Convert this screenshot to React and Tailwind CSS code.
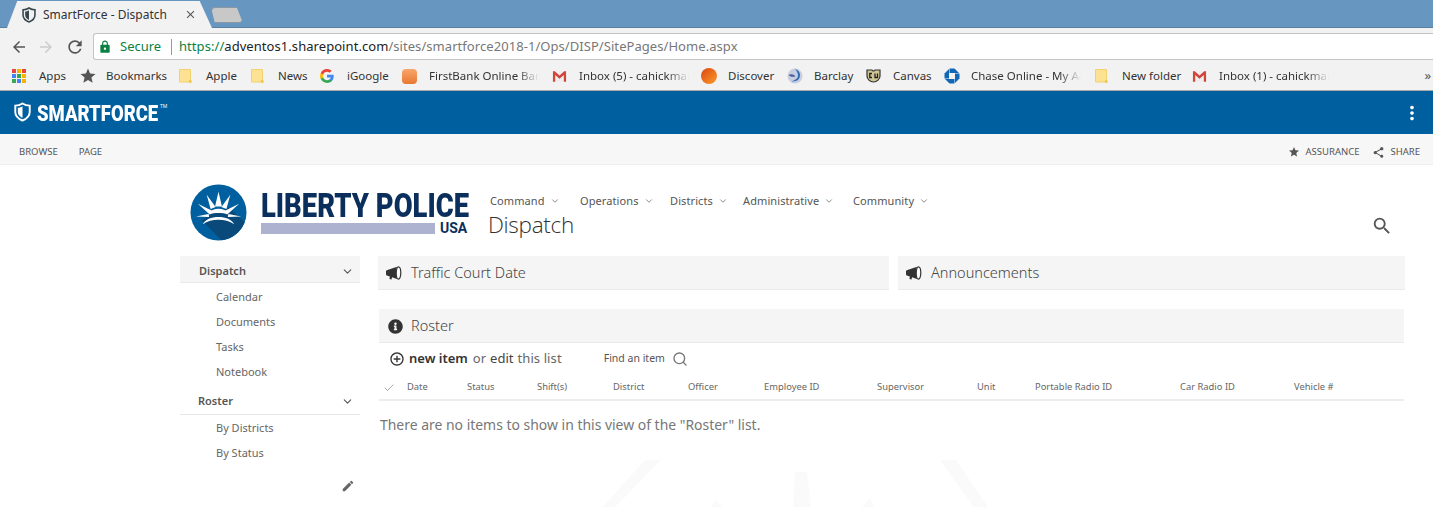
import { ChevronDown, Check, Search } from "lucide-react";
import { FaInfoCircle } from "react-icons/fa";
import {
  MdAddCircleOutline,
  MdArrowBack,
  MdArrowForward,
  MdClose,
  MdEdit,
  MdLock,
  MdMoreVert,
  MdRefresh,
  MdSearch,
  MdShare,
  MdStar,
} from "react-icons/md";

const FADE = "[mask-image:linear-gradient(to_right,black_80%,transparent)]";

function Shield({ className, stroke = "#37474f" }) {
  return (
    <svg viewBox="0 0 16 18" className={className}>
      <path d="M8 1 C5.500 2.600 3.500 3 1.200 3 V9 C1.200 13 4.500 15.600 8 17 C11.500 15.600 14.800 13 14.800 9 V3 C12.500 3 10.500 2.600 8 1 Z" fill="none" stroke={stroke} strokeWidth="1.800" />
      <path d="M8 3.600 V14.600 C5.500 13.400 3.600 11.600 3.600 9 V5 C5.300 5 6.600 4.500 8 3.600 Z" fill={stroke} />
    </svg>
  );
}

function Bullhorn() {
  return (
    <svg viewBox="0 0 16 14" className="w-[16px] h-[14px] mr-[9px] shrink-0">
      <path d="M0 5.500 C0 4.500 .6 4.300 1.500 4.100 L11 .8 C10 3 10 10.500 11 13 L6 11.300 L5.500 13.500 L3.500 13 L3.800 10.500 L1.500 9.700 C.6 9.500 0 9.300 0 8.300 Z" fill="#333" />
      <ellipse cx="12.500" cy="7" rx="2.300" ry="6.200" fill="#fff" stroke="#333" strokeWidth="1.200" />
    </svg>
  );
}

function Folder() {
  return (
    <svg viewBox="0 0 13 15" className="w-[13px] h-[15px]">
      <path d="M.5.5h11v12.500h-11z" fill="#fde293" stroke="#f2d26f" />
      <path d="M10 11h2.500v3H10z" fill="#f2c94c" />
    </svg>
  );
}

function Gmail() {
  return (
    <svg viewBox="0 0 16 12" className="w-[15px] h-[12px]">
      <path d="M1 1h14v11H1z" fill="#eee" />
      <path d="M1 12V1h2l5 4.400L13 1h2v11h-2.400V4.800L8 8.800 3.400 4.800V12z" fill="#d0463b" />
    </svg>
  );
}

function AppsGrid() {
  const colors = ["#e8453c", "#f4b400", "#e8453c", "#4285f4", "#34a853", "#f4b400", "#34a853", "#4285f4", "#f4b400"];
  return (
    <div className="grid grid-cols-3 gap-[1px] w-[14px]">
      {colors.map((c, i) => (
        <span key={i} className="w-[4px] h-[4px]" style={{ background: c }} />
      ))}
    </div>
  );
}

function GoogleG() {
  return (
    <svg viewBox="0 0 18 18" className="w-[14px] h-[14px]">
      <path d="M17.600 9.200c0-.6-.1-1.300-.2-1.800H9v3.400h4.800c-.2 1.100-.8 2-1.800 2.700v2.300h2.900c1.700-1.600 2.700-3.900 2.700-6.600z" fill="#4285f4" />
      <path d="M9 18c2.400 0 4.500-.8 5.900-2.200L12 13.500c-.8.500-1.800.9-3 .9-2.300 0-4.300-1.600-5-3.700H1v2.300C2.500 16 5.500 18 9 18z" fill="#34a853" />
      <path d="M4 10.700c-.4-1.100-.4-2.300 0-3.400V5H1c-1.300 2.500-1.300 5.500 0 8z" fill="#fbbc05" />
      <path d="M9 3.600c1.300 0 2.500.5 3.400 1.300L15 2.400C13.400.9 11.300 0 9 0 5.500 0 2.500 2 1 5l3 2.300c.7-2.100 2.700-3.700 5-3.700z" fill="#ea4335" />
    </svg>
  );
}

function FirstBank() {
  return <div className="w-[15px] h-[15px] rounded-sm bg-gradient-to-b from-[#f9a66b] to-[#e8772e]" />;
}

function Discover() {
  return <div className="w-[16px] h-[16px] rounded-full bg-gradient-to-br from-[#d9430f] to-[#fb9a2b]" />;
}

function Barclay() {
  return (
    <svg viewBox="0 0 16 16" className="w-[16px] h-[16px]">
      <circle cx="8" cy="8" r="7.500" fill="#c9cde0" />
      <path d="M8 .8c4 1.500 6 5 4.500 9-1 2.700-4 4-8 3.500 3.500-1 6-2.500 6.500-5C11.300 5.800 10 3 8 .8z" fill="#2a6bb3" />
      <path d="M1.500 7c2.500-1.500 5-1 7 1.500-2.500.5-5 .5-7-1.500z" fill="#4c5a9c" />
    </svg>
  );
}

function CU() {
  return (
    <svg viewBox="0 0 15 14" className="w-[15px] h-[14px]">
      <path d="M1 1h5l1 1h1l1-1h5v6c0 3-3 6-6.500 6S1 10 1 7z" fill="#cfc493" stroke="#333" strokeWidth="1.200" />
      <path d="M6 4.500H3.800v4H6M9 4.500v4h2.500v-4" fill="none" stroke="#222" strokeWidth="1.300" />
    </svg>
  );
}

function Chase() {
  return (
    <svg viewBox="0 0 16 16" className="w-[16px] h-[16px]" fill="#1166b5">
      <path d="M5.500 .5h5l4.500 4.500H5.500z" />
      <path d="M15.500 5.500v5L11 15V5.500z" />
      <path d="M10.500 15.500h-5L1 11h9.500z" />
      <path d="M.5 10.500v-5L5 1v9.500z" />
    </svg>
  );
}

const bookmarks = [
  { w: "w-[67px]", icon: <AppsGrid />, label: "Apps" },
  { w: "w-[100px]", icon: <MdStar className="text-[#555] text-[18px]" />, label: "Bookmarks" },
  { w: "w-[72px]", icon: <Folder />, label: "Apple" },
  { w: "w-[69px]", icon: <Folder />, label: "News" },
  { w: "w-[82px]", icon: <GoogleG />, label: "iGoogle" },
  { w: "w-[150px]", icon: <FirstBank />, label: "FirstBank Online Banking", fade: true },
  { w: "w-[149px]", icon: <Gmail />, label: "Inbox (5) - cahickman", fade: true },
  { w: "w-[86px]", icon: <Discover />, label: "Discover" },
  { w: "w-[79px]", icon: <Barclay />, label: "Barclay" },
  { w: "w-[78px]", icon: <CU />, label: "Canvas" },
  { w: "w-[151px]", icon: <Chase />, label: "Chase Online - My Accounts", fade: true },
  { w: "w-[97px]", icon: <Folder />, label: "New folder" },
  { w: "w-[149px]", icon: <Gmail />, label: "Inbox (1) - cahickman", fade: true },
];

function BrowserChrome() {
  return (
    <div className="font-['Noto_Sans',sans-serif] text-[#333]">
      {/* tab strip */}
      <div className="h-[28px] bg-[#6797c0] flex items-end border-b border-[#5b7f9f]">
        <div className="w-[205px] h-[27px] -mb-px ml-[7px] bg-[#f2f2f2] [clip-path:polygon(0_100%,5%_0,94%_0,100%_100%)] flex items-center pl-[15px] pr-[15px]">
          <Shield className="w-[14px] h-[16px]" />
          <span className="ml-[7px] text-[12px] flex-1 whitespace-nowrap">SmartForce - Dispatch</span>
          <MdClose className="text-[#555] text-[13px]" />
        </div>
        <div className="w-[32px] h-[16px] -ml-[1px] mb-[4px] bg-[#c8c8c8] border border-[#8b97a3] rounded-sm [clip-path:polygon(0_0,80%_0,100%_100%,12%_100%)]" />
      </div>

      {/* address bar */}
      <div className="h-[34px] pt-[3px] bg-[#f2f2f2] flex items-center">
        <div className="flex items-center pl-[10px] gap-[9px] text-[#555] w-[93px] shrink-0">
          <MdArrowBack className="text-[18px]" />
          <MdArrowForward className="text-[18px] text-[#ccc]" />
          <MdRefresh className="text-[20px] ml-px" />
        </div>
        <div className="flex-1 h-[27px] bg-white border border-[#c4c4c4] border-r-0 rounded-l-[3px] flex items-center whitespace-nowrap">
          <MdLock className="text-[#0b8043] text-[14px] ml-[4px]" />
          <span className="ml-[8px] text-[#0b8043] text-[13px] w-[42px]">Secure</span>
          <span className="w-px h-[16px] bg-[#999] ml-[9px] mr-[7px]" />
          <span className="text-[13px] tracking-[0.06px]">
            <span className="text-[#0b8043]">https://</span>
            <span className="text-[#222]">adventos1.sharepoint.com</span>
            <span className="text-[#777]">/sites/smartforce2018-1/Ops/DISP/SitePages/Home.aspx</span>
          </span>
        </div>
      </div>

      {/* bookmarks */}
      <div className="h-[29px] bg-[#f2f2f2] border-b border-[#a8a8a8] flex items-center pl-[12px] text-[11.5px]">
        {bookmarks.map((b) => (
          <div key={b.label} className={`${b.w} flex items-center shrink-0`}>
            <span className="w-[27px] flex items-center shrink-0">{b.icon}</span>
            <span className={b.fade ? `w-[110px] h-[16px] leading-[16px] overflow-hidden whitespace-nowrap ${FADE}` : "whitespace-nowrap"}>
              {b.label}
            </span>
          </div>
        ))}
        <span className="ml-auto pr-[2px] text-[13px] text-[#555]">»</span>
      </div>
    </div>
  );
}

function TopBars() {
  return (
    <>
      <div className="h-[43px] bg-[#005f9e] flex items-center justify-between pl-[14px] pr-[10px] text-white">
        <div className="flex items-start">
          <Shield className="w-[17px] h-[20px]" stroke="#ffffff" />
          <span className="ml-[6px] pt-[2px] w-[122px] font-['Roboto',sans-serif] font-black text-[22px] leading-[20px] whitespace-nowrap scale-x-[0.84] origin-left">
            SMARTFORCE
          </span>
          <span className="ml-[1px] text-[5px] leading-[8px]">TM</span>
        </div>
        <MdMoreVert className="text-[22px]" />
      </div>
      <div className="h-[31px] pt-[6px] bg-[#f7f7f7] border-b border-[#eeeeee] flex items-center pl-[19px] pr-[13px] text-[9.5px] text-[#555]">
        <span>BROWSE</span>
        <span className="ml-[21px]">PAGE</span>
        <div className="ml-auto flex items-center">
          <MdStar className="text-[12px]" />
          <span className="ml-[6px]">ASSURANCE</span>
          <MdShare className="text-[13px] ml-[13px]" />
          <span className="ml-[5px]">SHARE</span>
        </div>
      </div>
    </>
  );
}

function Logo() {
  return (
    <div className="flex items-center w-[300px] shrink-0 pl-[10px] self-start">
      <svg viewBox="0 0 58 58" className="w-[57px] h-[57px] shrink-0">
        <circle cx="29" cy="29" r="28.500" fill="#005f9e" />
        <path d="M12 37 L20 31 L40 24 L55.500 39 A28.500 28.500 0 0 1 32 57.300z" fill="#0a4a7a" />
        <g fill="#ffffff">
          <path d="M29 8 l3.500 15 h-7z" />
          <path d="M17 11 l9 12.500 -5 2z" />
          <path d="M41 11 l-9 12.500 5 2z" />
          <path d="M8 20 l14 7 -2.500 3.500z" />
          <path d="M50 20 l-14 7 2.500 3.500z" />
          <path d="M6 33 l13 -2.500 .5 3z" />
          <path d="M52 33 l-13 -2.500 -.5 3z" />
          <path d="M13 41 C17 31 41 31 45 41 C36 35 22 35 13 41z" />
          <path d="M19 29 C24 24 34 24 39 29 L38 31 C34 29 24 29 20 31z" />
        </g>
      </svg>
      <div className="ml-[14px] flex flex-col">
        <span className="w-[208px] pt-px font-['Roboto',sans-serif] font-black text-[33px] leading-[30px] text-[#0b2f5c] whitespace-nowrap scale-x-[0.83] origin-left">
          LIBERTY POLICE
        </span>
        <div className="flex items-center mt-[1px]">
          <div className="w-[174px] h-[11px] bg-[#acb2d0]" />
          <span className="ml-[5px] font-['Roboto',sans-serif] font-bold text-[14px] leading-[13px] text-[#0b2f5c]">USA</span>
        </div>
      </div>
    </div>
  );
}

const navItems = [
  { label: "Command", w: "w-[90px]" },
  { label: "Operations", w: "w-[90px]" },
  { label: "Districts", w: "w-[73px]" },
  { label: "Administrative", w: "w-[110px]" },
  { label: "Community", w: "w-[90px]" },
];

function SiteHeader() {
  return (
    <div className="h-[91px] flex">
      <div className="w-[180px] shrink-0" />
      <div className="pt-[19px] flex"><Logo /></div>
      <div className="flex-1 pt-[27px] pl-[10px] pr-[40px] flex flex-col">
        <div className="flex text-[11px] tracking-[0.1px] leading-[18px] text-[#555]">
          {navItems.map((n) => (
            <div key={n.label} className={`${n.w} flex items-center`}>
              {n.label}
              <ChevronDown className="w-[10px] h-[10px] ml-[5px] text-[#777]" />
            </div>
          ))}
        </div>
        <div className="flex items-center justify-between -mt-[1px]">
          <span className="text-[22.5px] leading-[31px] font-['Open_Sans',sans-serif] font-light text-[#333] -ml-[2px] tracking-[-0.3px]">Dispatch</span>
          <MdSearch className="text-[22px] text-[#555] mt-[2px]" />
        </div>
      </div>
    </div>
  );
}

function Sidebar() {
  return (
    <div className="w-[180px] shrink-0 text-[11px] text-[#666]">
      <div className="h-[27px] pt-[5px] bg-[#f5f5f5] border-b border-[#eaeaea] flex items-center justify-between pl-[19px] pr-[6px] font-semibold text-[#555]">
        Dispatch
        <ChevronDown className="w-[13px] h-[13px]" />
      </div>
      <div className="h-[2px]" />
      {["Calendar", "Documents", "Tasks", "Notebook"].map((t) => (
        <div key={t} className="h-[25px] flex items-center pl-[36px]">{t}</div>
      ))}
      <div className="mt-[3px] h-[27px] border-b border-[#e8e8e8] flex items-center justify-between pl-[18px] pr-[6px] font-semibold text-[#555]">
        Roster
        <ChevronDown className="w-[13px] h-[13px]" />
      </div>
      <div className="h-px" />
      {["By Districts", "By Status"].map((t) => (
        <div key={t} className="h-[25px] flex items-center pl-[36px]">{t}</div>
      ))}
      <div className="flex justify-end pr-[5px] pt-[13px]">
        <MdEdit className="text-[14px] text-[#666]" />
      </div>
    </div>
  );
}

function Panel({ icon, title, className }) {
  return (
    <div className={`h-[34px] pt-px bg-[#f5f5f5] border-b border-[#eaeaea] flex items-center ${className}`}>
      {icon}
      <span className="text-[14.5px] font-light text-[#444]">{title}</span>
    </div>
  );
}

const columns = [
  { label: "Date", w: "w-[60px]" },
  { label: "Status", w: "w-[70px]" },
  { label: "Shift(s)", w: "w-[76px]" },
  { label: "District", w: "w-[75px]" },
  { label: "Officer", w: "w-[76px]" },
  { label: "Employee ID", w: "w-[113px]" },
  { label: "Supervisor", w: "w-[100px]" },
  { label: "Unit", w: "w-[58px]" },
  { label: "Portable Radio ID", w: "w-[145px]" },
  { label: "Car Radio ID", w: "w-[114px]" },
  { label: "Vehicle #", w: "w-[80px]" },
];

function Content() {
  return (
    <div className="ml-[18px] w-[1027px] shrink-0">
      <div className="flex gap-[9px]">
        <Panel className="w-[511px] pl-[8px]" title="Traffic Court Date" icon={<Bullhorn />} />
        <Panel className="w-[507px] pl-[8px]" title="Announcements" icon={<Bullhorn />} />
      </div>
      <div className="mt-[19px] ml-px w-[1025px]">
        <Panel
          className="pl-[9px]"
          title="Roster"
          icon={<FaInfoCircle className="text-[15px] text-[#333] mr-[8px]" />}
        />
        <div className="h-[32px] flex items-center pl-[10px] text-[13px] text-[#666]">
          <MdAddCircleOutline className="text-[16px] text-[#333] mr-[4px]" />
          <span className="font-semibold text-[#333]">new item</span>
          <span className="ml-[5px]">or</span>
          <span className="ml-[4px] text-[#444]">edit</span>
          <span className="ml-[4px] tracking-[0.1px]">this list</span>
          <span className="ml-[42px] text-[10.5px] text-[#555]">Find an item</span>
          <Search className="w-[16px] h-[16px] ml-[7px] text-[#777]" />
        </div>
        <div className="h-[26px] pt-px border-b-2 border-[#ededed] flex items-center text-[9.4px] text-[#666]">
          <Check className="w-[12px] h-[12px] ml-[4px] mr-[12px] text-[#777]" strokeWidth={1.25} />
          {columns.map((c) => (
            <span key={c.label} className={`${c.w} shrink-0`}>{c.label}</span>
          ))}
        </div>
        <p className="mt-[14px] pl-px text-[13.95px] leading-[20px] text-[#777]">
          There are no items to show in this view of the "Roster" list.
        </p>
      </div>
    </div>
  );
}

function Watermark() {
  return (
    <svg viewBox="0 0 420 47" className="absolute left-[595px] top-[460px] w-[420px] h-[47px]" fill="#fafafa">
      <path d="M50 0h16L20 47H8z" />
      <path d="M200 12h12l4 35h-18z" />
      <path d="M345 0h16l32 47h-14z" />
      <path d="M120 40l8 7h-12z" />
      <path d="M275 38l4 9h-12z" />
    </svg>
  );
}

export default function App() {
  return (
    <div className="relative w-[1433px] h-[507px] overflow-hidden bg-white font-['Noto_Sans',sans-serif]">
      <BrowserChrome />
      <TopBars />
      <SiteHeader />
      <div className="flex pl-[180px]">
        <Sidebar />
        <Content />
      </div>
      <Watermark />
    </div>
  );
}
